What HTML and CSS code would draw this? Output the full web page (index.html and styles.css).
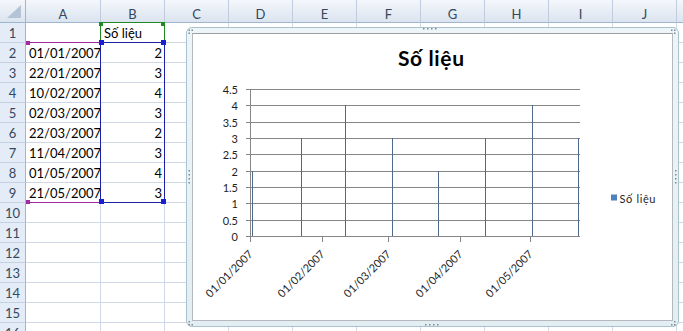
FILE: index.html
```html
<!DOCTYPE html>
<html lang="vi">
<head>
<meta charset="utf-8">
<title>Số liệu</title>
<link rel="stylesheet" href="styles.css">
</head>
<body>
<div class="sheet">
  <div class="row head">
    <div class="corner"></div><div class="a">A</div><div>B</div><div>C</div><div>D</div><div>E</div><div>F</div><div>G</div><div>H</div><div>I</div><div>J</div><div></div>
  </div>
  <div class="row"><div class="rh">1</div><div class="a"></div><div>Số liệu</div><div></div><div></div><div></div><div></div><div></div><div></div><div></div><div></div><div></div></div>
  <div class="row"><div class="rh">2</div><div class="a">01/01/2007</div><div class="num">2</div><div></div><div></div><div></div><div></div><div></div><div></div><div></div><div></div><div></div></div>
  <div class="row"><div class="rh">3</div><div class="a">22/01/2007</div><div class="num">3</div><div></div><div></div><div></div><div></div><div></div><div></div><div></div><div></div><div></div></div>
  <div class="row"><div class="rh">4</div><div class="a">10/02/2007</div><div class="num">4</div><div></div><div></div><div></div><div></div><div></div><div></div><div></div><div></div><div></div></div>
  <div class="row"><div class="rh">5</div><div class="a">02/03/2007</div><div class="num">3</div><div></div><div></div><div></div><div></div><div></div><div></div><div></div><div></div><div></div></div>
  <div class="row"><div class="rh">6</div><div class="a">22/03/2007</div><div class="num">2</div><div></div><div></div><div></div><div></div><div></div><div></div><div></div><div></div><div></div></div>
  <div class="row"><div class="rh">7</div><div class="a">11/04/2007</div><div class="num">3</div><div></div><div></div><div></div><div></div><div></div><div></div><div></div><div></div><div></div></div>
  <div class="row"><div class="rh">8</div><div class="a">01/05/2007</div><div class="num">4</div><div></div><div></div><div></div><div></div><div></div><div></div><div></div><div></div><div></div></div>
  <div class="row"><div class="rh">9</div><div class="a">21/05/2007</div><div class="num">3</div><div></div><div></div><div></div><div></div><div></div><div></div><div></div><div></div><div></div></div>
  <div class="row"><div class="rh">10</div><div class="a"></div><div></div><div></div><div></div><div></div><div></div><div></div><div></div><div></div><div></div><div></div></div>
  <div class="row"><div class="rh">11</div><div class="a"></div><div></div><div></div><div></div><div></div><div></div><div></div><div></div><div></div><div></div><div></div></div>
  <div class="row"><div class="rh">12</div><div class="a"></div><div></div><div></div><div></div><div></div><div></div><div></div><div></div><div></div><div></div><div></div></div>
  <div class="row"><div class="rh">13</div><div class="a"></div><div></div><div></div><div></div><div></div><div></div><div></div><div></div><div></div><div></div><div></div></div>
  <div class="row"><div class="rh">14</div><div class="a"></div><div></div><div></div><div></div><div></div><div></div><div></div><div></div><div></div><div></div><div></div></div>
  <div class="row"><div class="rh">15</div><div class="a"></div><div></div><div></div><div></div><div></div><div></div><div></div><div></div><div></div><div></div><div></div></div>
  <div class="row"><div class="rh">16</div><div class="a"></div><div></div><div></div><div></div><div></div><div></div><div></div><div></div><div></div><div></div><div></div></div>

  <!-- range highlight overlays -->
  <div class="sel-green"></div>
  <div class="sel-purple"></div>
  <div class="sel-blue"></div>
  <div class="hd green g1"></div>
  <div class="hd green g2"></div>
  <div class="hd purple p1"></div>
  <div class="hd purple p2"></div>
  <div class="hd blue b1"></div>
  <div class="hd blue b2"></div>
  <div class="hd blue b3"></div>
  <div class="hd blue b4"></div>

  <!-- chart object -->
  <div class="chart">
    <div class="chart-inner"></div>
    <svg class="chart-svg" width="493" height="300" viewBox="186 27 493 300">
      <g class="dots">
        <rect x="423" y="28" width="1.5" height="1.5"/><rect x="427" y="28" width="1.5" height="1.5"/><rect x="431" y="28" width="1.5" height="1.5"/><rect x="435" y="28" width="1.5" height="1.5"/>
        <rect x="425" y="324" width="1.5" height="1.5"/><rect x="429" y="324" width="1.5" height="1.5"/><rect x="433" y="324" width="1.5" height="1.5"/><rect x="437" y="324" width="1.5" height="1.5"/>
        <rect x="188.5" y="170" width="1.5" height="1.5"/><rect x="188.5" y="174" width="1.5" height="1.5"/><rect x="188.5" y="178" width="1.5" height="1.5"/><rect x="188.5" y="182" width="1.5" height="1.5"/>
        <rect x="675" y="170" width="1.5" height="1.5"/><rect x="675" y="174" width="1.5" height="1.5"/><rect x="675" y="178" width="1.5" height="1.5"/><rect x="675" y="182" width="1.5" height="1.5"/>
        <rect x="188.5" y="29.5" width="1.5" height="1.5"/><rect x="191.5" y="29.5" width="1.5" height="1.5"/><rect x="188.5" y="32.5" width="1.5" height="1.5"/>
        <rect x="671" y="29.5" width="1.5" height="1.5"/><rect x="674" y="29.5" width="1.5" height="1.5"/><rect x="674" y="32.5" width="1.5" height="1.5"/>
        <rect x="188.5" y="321" width="1.5" height="1.5"/><rect x="188.5" y="324" width="1.5" height="1.5"/><rect x="191.5" y="324" width="1.5" height="1.5"/>
        <rect x="674" y="321" width="1.5" height="1.5"/><rect x="671" y="324" width="1.5" height="1.5"/><rect x="674" y="324" width="1.5" height="1.5"/>
      </g>

      <text class="title" x="431" y="65.5" text-anchor="middle" textLength="66">Số liệu</text>

      <g class="gridlines">
        <line x1="246" y1="89.5" x2="580" y2="89.5"/>
        <line x1="246" y1="105.5" x2="580" y2="105.5"/>
        <line x1="246" y1="122.5" x2="580" y2="122.5"/>
        <line x1="246" y1="138.5" x2="580" y2="138.5"/>
        <line x1="246" y1="154.5" x2="580" y2="154.5"/>
        <line x1="246" y1="171.5" x2="580" y2="171.5"/>
        <line x1="246" y1="187.5" x2="580" y2="187.5"/>
        <line x1="246" y1="203.5" x2="580" y2="203.5"/>
        <line x1="246" y1="220.5" x2="580" y2="220.5"/>
        <line x1="246" y1="236.5" x2="580" y2="236.5"/>
        <line x1="250.5" y1="89" x2="250.5" y2="242"/>
        <line x1="322.5" y1="236" x2="322.5" y2="242"/>
        <line x1="388.5" y1="236" x2="388.5" y2="242"/>
        <line x1="460.5" y1="236" x2="460.5" y2="242"/>
        <line x1="530.5" y1="236" x2="530.5" y2="242"/>
      </g>

      <g class="bars">
        <line x1="252.5" y1="171" x2="252.5" y2="236"/>
        <line x1="301.5" y1="138" x2="301.5" y2="236"/>
        <line x1="345.5" y1="105" x2="345.5" y2="236"/>
        <line x1="392.5" y1="138" x2="392.5" y2="236"/>
        <line x1="438.5" y1="171" x2="438.5" y2="236"/>
        <line x1="485.5" y1="138" x2="485.5" y2="236"/>
        <line x1="532.5" y1="105" x2="532.5" y2="236"/>
        <line x1="578.5" y1="138" x2="578.5" y2="236"/>
      </g>

      <g class="ax yl">
        <text x="238" y="93.5">4.5</text>
        <text x="238" y="109.5">4</text>
        <text x="238" y="126.5">3.5</text>
        <text x="238" y="142.5">3</text>
        <text x="238" y="158.5">2.5</text>
        <text x="238" y="175.5">2</text>
        <text x="238" y="191.5">1.5</text>
        <text x="238" y="207.5">1</text>
        <text x="238" y="224.5">0.5</text>
        <text x="238" y="240.5">0</text>
      </g>

      <g class="ax xl">
        <text transform="translate(253.5 255) rotate(-45)">01/01/2007</text>
        <text transform="translate(325.5 255) rotate(-45)">01/02/2007</text>
        <text transform="translate(391.5 255) rotate(-45)">01/03/2007</text>
        <text transform="translate(463.5 255) rotate(-45)">01/04/2007</text>
        <text transform="translate(533.5 255) rotate(-45)">01/05/2007</text>
      </g>

      <rect class="legend-key" x="611" y="194.5" width="6" height="6"/>
      <text class="ax" x="619.5" y="202.5" textLength="36">Số liệu</text>
    </svg>
  </div>
</div>
</body>
</html>
```

FILE: styles.css
```css
* { box-sizing: border-box; }

body {
  margin: 0;
  width: 683px;
  height: 331px;
  overflow: hidden;
  background: #fff;
  font-family: Lato, "Open Sans", "Liberation Sans", sans-serif;
}

.sheet {
  position: relative;
  width: 683px;
  height: 331px;
  overflow: hidden;
}

.row {
  display: flex;
  height: 20px;
}

.row > div {
  flex: none;
  width: 64px;
  border-right: 1px solid #d0d7e5;
  border-bottom: 1px solid #d0d7e5;
  display: flex;
  align-items: flex-end;
  padding: 0 3px 1px;
  font-size: 13px;
  line-height: 16px;
  white-space: nowrap;
  color: #000;
}

.row > .a { width: 75px; }

.row > .num {
  justify-content: flex-end;
  padding-right: 2px;
}

.row > .rh {
  width: 26px;
  background: #e4ecf7;
  border-right-color: #9eb6ce;
  border-bottom-color: #c3d1e2;
  justify-content: center;
  padding: 0 0 1px;
  color: #34475f;
}

.row.head { height: 23px; }

.head > div {
  background: linear-gradient(#f4f7fb, #dbe4ef);
  border-right-color: #c0cddd;
  border-bottom-color: #9eb6ce;
  justify-content: center;
  padding: 0;
  color: #34475f;
}

.head > .corner {
  width: 26px;
  position: relative;
  border-right-color: #9eb6ce;
}

.corner::after {
  content: "";
  position: absolute;
  left: 7px;
  top: 5px;
  width: 14px;
  height: 13px;
  background: #b4c3d5;
  clip-path: polygon(100% 0, 100% 100%, 0 100%);
}

/* range highlights */
.sel-green {
  position: absolute;
  left: 100px;
  top: 22px;
  width: 65px;
  height: 21px;
  border: 1px solid #1f8a24;
  border-bottom: none;
}

.sel-purple {
  position: absolute;
  left: 26px;
  top: 42px;
  width: 75px;
  height: 161px;
  border-top: 1px solid #a02aa4;
  border-bottom: 1px solid #a02aa4;
}

.sel-blue {
  position: absolute;
  left: 100px;
  top: 42px;
  width: 65px;
  height: 161px;
  border: 1px solid #1d1fa6;
}

.hd {
  position: absolute;
  width: 4px;
  height: 4px;
}
.hd.green { background: #1f8a24; }
.hd.purple { background: #a02aa4; }
.hd.blue { background: #1a1fd0; width: 5px; height: 5px; }

.g1 { left: 99px; top: 22px; }
.g2 { left: 161px; top: 22px; }
.p1 { left: 26px; top: 41px; }
.p2 { left: 26px; top: 200px; }
.b1 { left: 99px; top: 40px; }
.b2 { left: 161px; top: 40px; }
.b3 { left: 99px; top: 199px; }
.b4 { left: 161px; top: 199px; }

/* chart object floating over the grid */
.chart {
  position: absolute;
  left: 186px;
  top: 27px;
  width: 493px;
  height: 300px;
  border: 1px solid #a7c3cd;
  border-radius: 6px;
  background: linear-gradient(#eef5f8, #e3eef2);
  padding: 5px;
}

.chart-inner {
  width: 100%;
  height: 100%;
  background: #fff;
  border: 1px solid #b3b9bd;
  border-top-color: #9a9fa3;
}

.chart-svg {
  position: absolute;
  left: -1px;
  top: -1px;
}

.dots rect { fill: #7d8a96; }

.title {
  font-family: Lato, "Open Sans", sans-serif;
  font-weight: bold;
  font-size: 21px;
  fill: #000;
}

.gridlines line {
  stroke: #868686;
  stroke-width: 1;
  shape-rendering: crispEdges;
}

.bars line {
  stroke: #4f6a8a;
  stroke-width: 1;
  shape-rendering: crispEdges;
}

.ax {
  font-family: Lato, "Open Sans", sans-serif;
  font-size: 11px;
  fill: #1e1e1e;
}

.yl text, .xl text { text-anchor: end; }

.legend-key { fill: #4f81bd; }
```
